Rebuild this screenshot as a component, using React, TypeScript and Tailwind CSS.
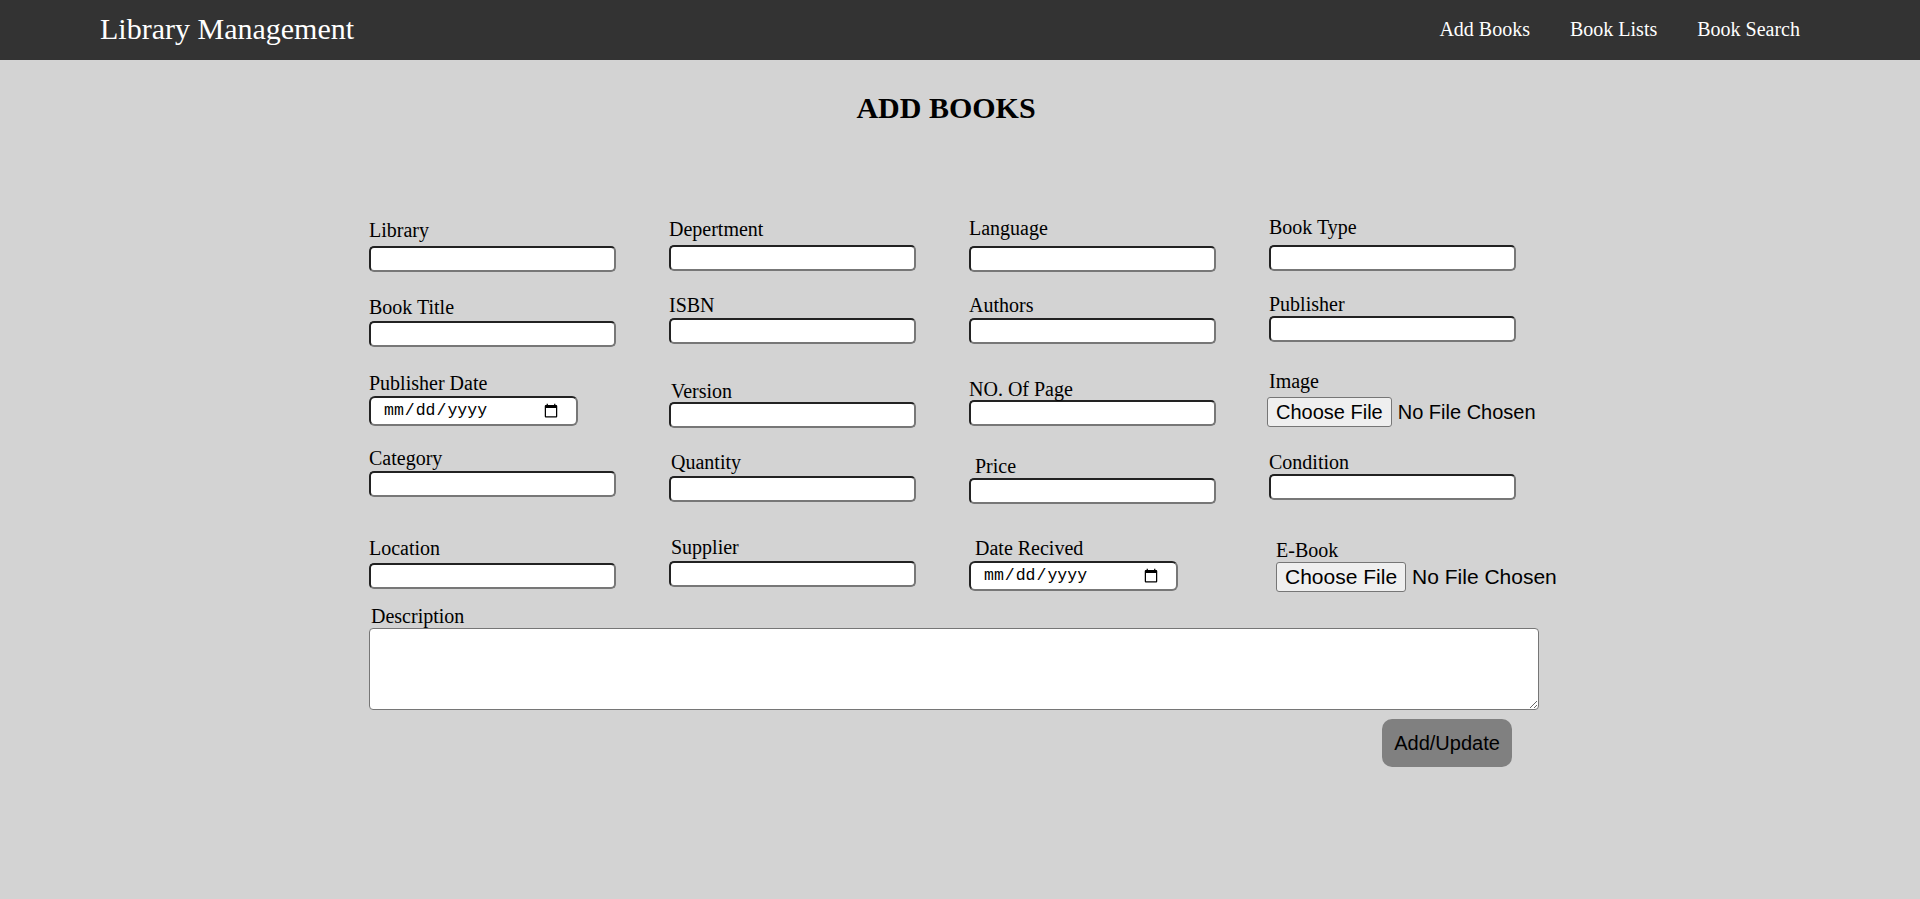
import React from 'react';

type Field = {
  label: string;
  type: 'text' | 'date' | 'file';
  cell: string; // top padding of the cell
  gap: string; // space between label and control
  labelShift?: string;
  controlShift?: string;
  fileSize?: string;
};

const rows: Field[][] = [
  [
    { label: 'Library', type: 'text', cell: 'pt-[4px]', gap: 'mt-[4px]' },
    { label: 'Depertment', type: 'text', cell: 'pt-[3px]', gap: 'mt-[4px]' },
    { label: 'Language', type: 'text', cell: 'pt-[2px]', gap: 'mt-[6px]' },
    { label: 'Book Type', type: 'text', cell: 'pt-[1px]', gap: 'mt-[6px]' },
  ],
  [
    { label: 'Book Title', type: 'text', cell: 'pt-[4px]', gap: 'mt-[2px]' },
    { label: 'ISBN', type: 'text', cell: 'pt-[2px]', gap: 'mt-[1px]' },
    { label: 'Authors', type: 'text', cell: 'pt-[2px]', gap: 'mt-[1px]' },
    { label: 'Publisher', type: 'text', cell: 'pt-[1px]', gap: 'mt-0' },
  ],
  [
    { label: 'Publisher Date', type: 'date', cell: 'pt-[3px]', gap: 'mt-[1px]' },
    { label: 'Version', type: 'text', cell: 'pt-[11px]', gap: '-mt-[1px]', labelShift: 'ml-[2px]' },
    { label: 'NO. Of Page', type: 'text', cell: 'pt-[9px]', gap: '-mt-[1px]' },
    { label: 'Image', type: 'file', cell: 'pt-[1px]', gap: 'mt-[4px]', controlShift: '-ml-[2px]' },
  ],
  [
    { label: 'Category', type: 'text', cell: 'pt-[1px]', gap: 'mt-[1px]' },
    { label: 'Quantity', type: 'text', cell: 'pt-[5px]', gap: 'mt-[2px]', labelShift: 'ml-[2px]' },
    { label: 'Price', type: 'text', cell: 'pt-[9px]', gap: 'mt-0', labelShift: 'ml-[6px]' },
    { label: 'Condition', type: 'text', cell: 'pt-[5px]', gap: 'mt-0' },
  ],
  [
    { label: 'Location', type: 'text', cell: 'pt-[2px]', gap: 'mt-[3px]' },
    { label: 'Supplier', type: 'text', cell: 'pt-[1px]', gap: 'mt-[2px]', labelShift: 'ml-[2px]' },
    { label: 'Date Recived', type: 'date', cell: 'pt-[2px]', gap: 'mt-[1px]', labelShift: 'ml-[6px]' },
    {
      label: 'E-Book',
      type: 'file',
      cell: 'pt-[4px]',
      gap: '-mt-[1px]',
      labelShift: 'ml-[7px]',
      controlShift: 'ml-[7px]',
      fileSize: 'text-[21px]',
    },
  ],
];

const insetBorder =
  'border-2 border-t-[#222222] border-l-[#222222] border-r-[#777777] border-b-[#777777] bg-white outline-none';

const Control = ({ field }: { field: Field }) => {
  if (field.type === 'date') {
    return (
      <input
        type="date"
        className={`block w-[209px] h-[30px] rounded-[6px] pl-[12px] pr-[15px] text-[16.5px] text-black font-['Liberation_Mono',monospace] ${insetBorder} ${field.gap}`}
      />
    );
  }
  if (field.type === 'file') {
    const size = field.fileSize ?? 'text-[20px]';
    return (
      <div className={`flex items-center ${field.gap} ${field.controlShift ?? ''}`}>
        <button
          type="button"
          className={`h-[30px] px-[8px] bg-[#efefef] border border-[#767676] rounded-[3px] leading-none text-black font-['Liberation_Sans',Arial,sans-serif] ${size}`}
        >
          Choose File
        </button>
        <span className={`ml-[6px] text-black font-['Liberation_Sans',Arial,sans-serif] ${size}`}>
          No File Chosen
        </span>
      </div>
    );
  }
  return (
    <input
      type="text"
      className={`block w-[247px] h-[26px] rounded-[5px] px-[3px] text-[16px] ${insetBorder} ${field.gap}`}
    />
  );
};

const App = () => {
  return (
    <div className="min-h-screen bg-[#d3d3d3] font-['Liberation_Serif','Times_New_Roman',serif] text-black">
      {/* Top bar */}
      <header className="h-[60px] bg-[#333333] flex items-center justify-between pl-[100px] pr-[120px] pb-[3px]">
        <h1 className="text-[30px] text-white leading-none">Library Management</h1>
        <nav className="flex gap-[40px] text-[20px] text-white">
          <a href="#">Add Books</a>
          <a href="#">Book Lists</a>
          <a href="#">Book Search</a>
        </nav>
      </header>

      <main className="w-[1182px] mx-auto">
        <h2 className="mt-[31px] pr-[28px] text-center text-[30px] font-bold leading-[34px]">ADD BOOKS</h2>

        <form className="mt-[90px]" onSubmit={(e) => e.preventDefault()}>
          <div className="grid grid-cols-[300px_300px_300px_300px] grid-rows-[77px_77px_77px_89px_70px]">
            {rows.flat().map((field) => (
              <div key={field.label} className={field.cell}>
                <label className={`block text-[20px] leading-[23px] ${field.labelShift ?? ''}`}>
                  {field.label}
                </label>
                <Control field={field} />
              </div>
            ))}
          </div>

          {/* Description */}
          <label className="block ml-[2px] text-[20px] leading-[23px]">Description</label>
          <textarea className="block w-[1170px] h-[82px] bg-white border border-[#767676] rounded-[4px] outline-none" />

          <div className="flex justify-end pr-[39px] mt-[9px]">
            <button
              type="submit"
              className="w-[130px] h-[48px] bg-[#808080] rounded-[10px] text-[20px] text-black font-['Liberation_Sans',Arial,sans-serif]"
            >
              Add/Update
            </button>
          </div>
        </form>
      </main>
    </div>
  );
};

export default App;
